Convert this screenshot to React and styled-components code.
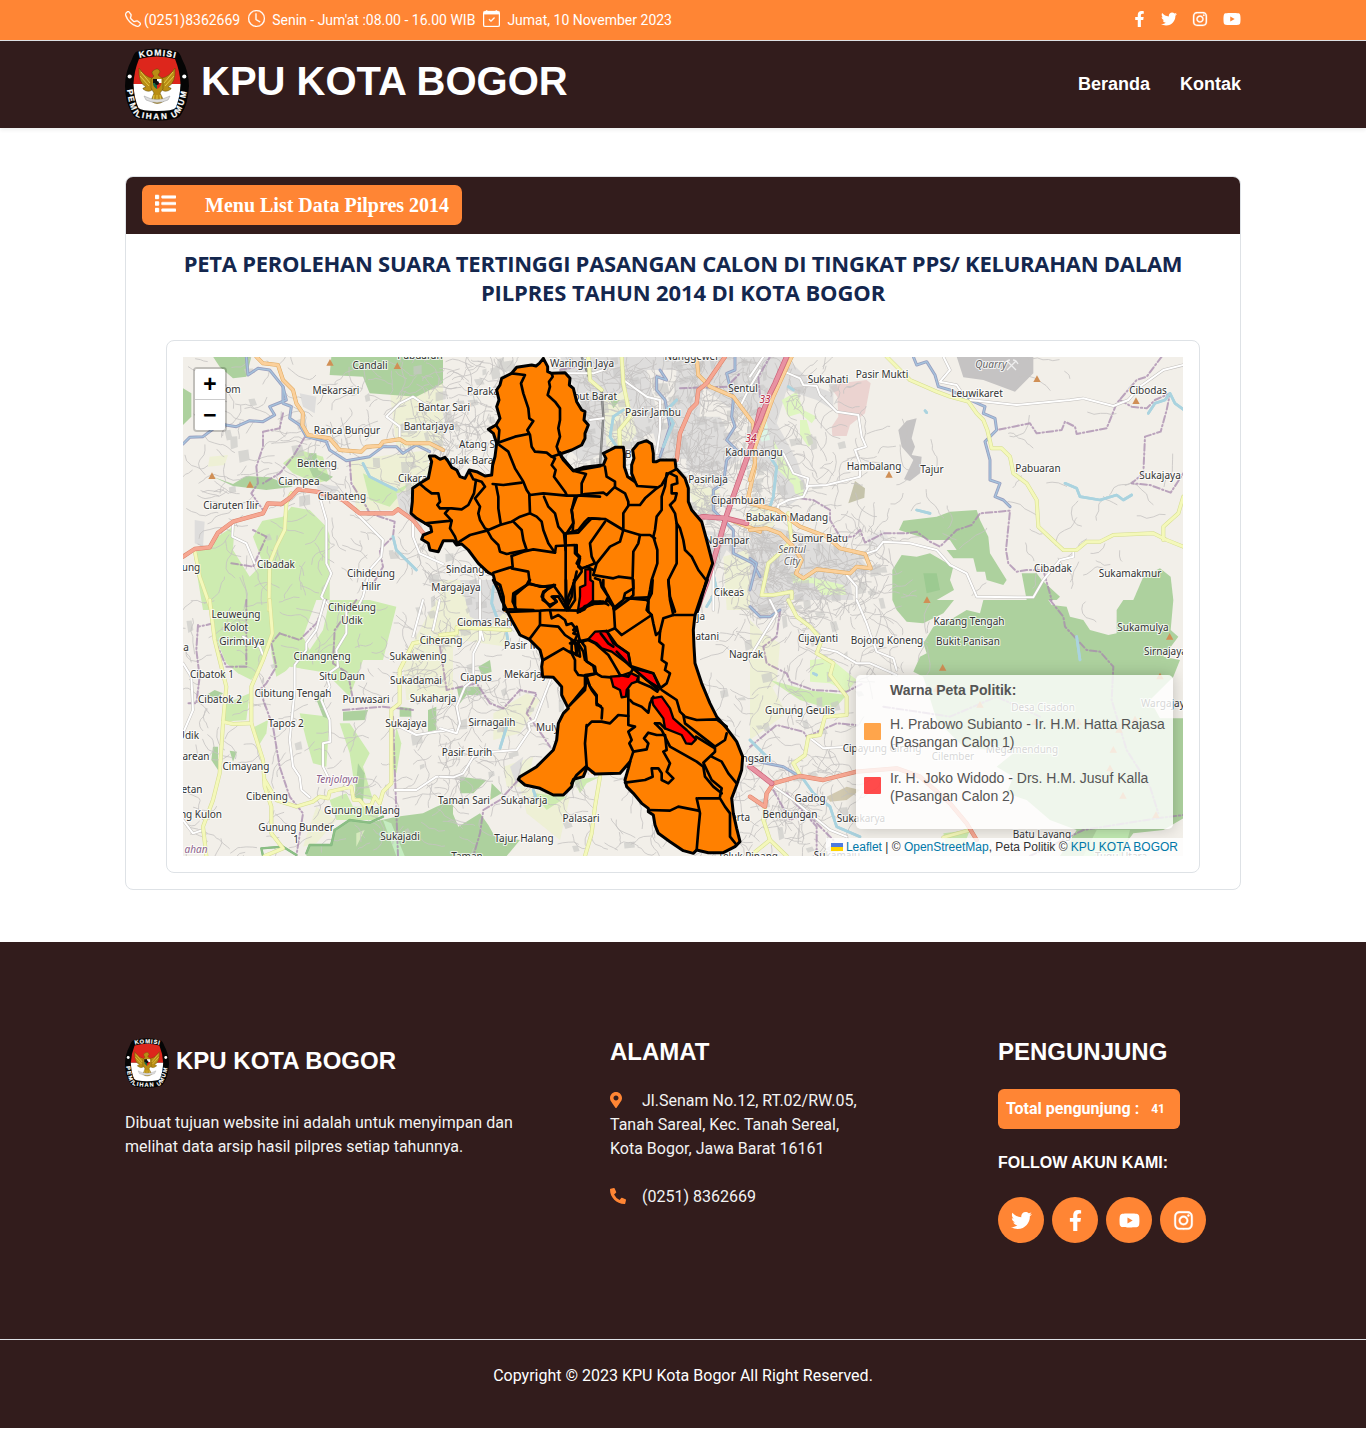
import React from "react";
import styled, { createGlobalStyle } from "styled-components";
import { BsTelephone, BsClock, BsCalendarCheck } from "react-icons/bs";
import {
  FaFacebookF,
  FaTwitter,
  FaInstagram,
  FaYoutube,
  FaList,
  FaMapMarkerAlt,
  FaPhoneAlt,
} from "react-icons/fa";

const ORANGE = "#ff8534";
const DARK = "#321c1c";
const SANS = '"Liberation Sans", Arial, sans-serif';
const BODY = 'Roboto, "Liberation Sans", sans-serif';

const GlobalStyle = createGlobalStyle`
  *, *::before, *::after { box-sizing: border-box; }
  body { margin: 0; background: #fff; font-family: ${BODY}; font-size: 16px; line-height: 24px; color: #212529; }
  h1, h2, h3, p { margin: 0; }
  a { color: inherit; text-decoration: none; }
  svg { display: block; }
`;

const Container = styled.div`
  width: 1116px;
  margin: 0 auto;
`;

const TopBar = styled.div`
  background: ${ORANGE};
  border-bottom: 1px solid #dee2e6;
  color: #fff;
`;
const TopInner = styled(Container)`
  height: 40px;
  display: flex;
  justify-content: space-between;
  padding-bottom: 1px;
  align-items: center;
`;
const ContactList = styled.div`
  display: flex;
  align-items: center;
  font-size: 14px;
`;
const ContactItem = styled.span`
  display: flex;
  align-items: center;
  gap: ${(p) => p.$gap}px;
  margin-right: 8px;
  white-space: nowrap;
  svg {
    margin-bottom: 2px;
    stroke: #fff;
    stroke-width: 0.3px;
  }
`;
const TopSocial = styled.div`
  display: flex;
  align-items: center;
  gap: 15px;
  padding-bottom: 2px;
`;
const FacebookIcon = styled(FaFacebookF)`
  width: 13px;
  height: 16px;
`;
const InstagramIcon = styled(FaInstagram)`
  stroke: currentColor;
  stroke-width: 10px;
`;

const Header = styled.header`
  background: ${DARK};
  box-shadow: 0 2px 4px rgba(0, 0, 0, 0.075);
`;
const HeaderInner = styled(Container)`
  height: 87px;
  display: flex;
  justify-content: space-between;
  align-items: center;
`;
const Brand = styled.a`
  display: flex;
  align-items: center;
  gap: ${(p) => p.$gap}px;
`;
const BrandName = styled.h1`
  font: 700 ${(p) => p.$size}px/1.2 ${SANS};
  color: #fff;
  padding-bottom: ${(p) => p.$lift || 0}px;
  white-space: nowrap;
`;
const Nav = styled.nav`
  display: flex;
  gap: 30px;
  padding-bottom: 2px;
  font: 700 18px/24px ${SANS};
  color: #fff;
`;

const Main = styled.main`
  padding: 48px 0 52px;
`;
const Card = styled.section`
  border: 1px solid #dee2e6;
  border-radius: 8px;
  overflow: hidden;
  padding-bottom: 16px;
`;
const CardHeader = styled.div`
  background: ${DARK};
  height: 57px;
  padding: 8px 16px;
`;
const MenuButton = styled.button`
  display: flex;
  align-items: center;
  gap: 29px;
  width: 320px;
  height: 40px;
  padding: 0 12px 1px 13px;
  border: 0;
  border-radius: 7px;
  background: ${ORANGE};
  color: #fff;
  font: 700 20px/24px "Liberation Serif", "Times New Roman", serif;
  white-space: nowrap;
  svg {
    margin-bottom: 2px;
    stroke: #fff;
    stroke-width: 12px;
  }
`;
const MapTitle = styled.h2`
  margin: 15px 40px 33px;
  text-align: center;
  font: 700 22px/29px "Open Sans", ${SANS};
  color: #14274e;
`;
const TitleLine = styled.span`
  display: block;
  letter-spacing: ${(p) => p.$spacing}px;
  white-space: nowrap;
`;
const MapFrame = styled.div`
  margin: 0 40px;
  padding: 16px;
  border: 1px solid #dee2e6;
  border-radius: 8px;
`;
const MapCanvas = styled.div`
  position: relative;
  height: 499px;
  overflow: hidden;
  background: #f2efe9;
`;
const ZoomControl = styled.div`
  position: absolute;
  top: 10px;
  left: 10px;
  border: 2px solid rgba(0, 0, 0, 0.2);
  border-radius: 4px;
  background-clip: padding-box;
  overflow: hidden;
`;
const ZoomButton = styled.div`
  width: 30px;
  height: ${(p) => (p.$first ? 31 : 30)}px;
  padding-top: 3px;
  background: #fff;
  border-bottom: ${(p) => (p.$first ? "1px solid #ccc" : "0")};
  display: grid;
  place-items: center;
  color: #000;
  font: 700 23px/28px "Liberation Mono", monospace;
`;
const Legend = styled.div`
  position: absolute;
  right: 10px;
  bottom: 27px;
  width: 317px;
  height: 154px;
  padding: 6px 8px;
  border-radius: 5px;
  background: rgba(255, 255, 255, 0.8);
  box-shadow: 0 0 15px rgba(0, 0, 0, 0.2);
  font: 14px/18px ${SANS};
  color: #555;
`;
const LegendTitle = styled.div`
  font-weight: 700;
  padding-left: 26px;
  margin-bottom: 16px;
`;
const LegendRow = styled.div`
  display: flex;
  align-items: center;
  gap: 9px;
  margin-bottom: 18px;
  white-space: nowrap;
`;
const Swatch = styled.i`
  width: 17px;
  height: 17px;
  flex: none;
  margin-bottom: 3px;
  opacity: 0.7;
  border-radius: 1px;
  background: ${(p) => p.$color};
`;
const Attribution = styled.div`
  position: absolute;
  right: 0;
  bottom: 0;
  height: 18px;
  padding: 0 5px;
  background: rgba(255, 255, 255, 0.8);
  font: 12px/18px ${SANS};
  color: #333;
  display: flex;
  align-items: center;
  white-space: pre;
  a { color: #0078a8; }
`;
const FlagIcon = styled.svg`
  margin-right: 3px;
`;

const Footer = styled.footer`
  background: ${DARK};
  color: #fff;
`;
const FooterGrid = styled(Container)`
  display: grid;
  grid-template-columns: 485px 388px 1fr;
  height: 397px;
  padding-top: 96px;
`;
const FooterHeading = styled.h2`
  font: 700 24px/28px ${SANS};
  margin-bottom: 23px;
`;
const FooterText = styled.p`
  color: #f3f3f3;
  white-space: pre-line;
  margin-top: ${(p) => p.$top || 0}px;
`;
const PlaceIcon = styled.span`
  display: inline-block;
  width: 32px;
  color: ${ORANGE};
  svg { display: inline-block; vertical-align: -2px; }
`;
const MarkerIcon = styled(FaMapMarkerAlt)`
  width: 12px;
  height: 16px;
`;
const VisitorBadge = styled.div`
  width: 182px;
  height: 40px;
  border-radius: 6px;
  background: ${ORANGE};
  display: flex;
  align-items: center;
  padding-left: 8px;
  font-weight: 700;
  font-size: 16px;
`;
const VisitorCount = styled.span`
  font-size: 12px;
  margin-left: 12px;
`;
const FollowTitle = styled.h3`
  font: 700 16px/24px ${SANS};
  margin: 22px 0 22px;
`;
const SocialRow = styled.div`
  display: flex;
  gap: 8px;
`;
const SocialButton = styled.a`
  width: 46px;
  height: 46px;
  border-radius: 50%;
  background: ${ORANGE};
  display: grid;
  place-items: center;
  font-size: 21px;
`;
const Copyright = styled.div`
  border-top: 1px solid #dee2e6;
  height: 89px;
  padding-top: 24px;
  text-align: center;
`;

/* ---------- Logo ---------- */

function KpuLogo({ width, height, id }) {
  return (
    <svg width={width} height={height} viewBox="0 0 64 73" preserveAspectRatio="none">
      <defs>
        <path id={`${id}-top`} d="M13.500 10Q32 5 52 10.500" />
        <path id={`${id}-low`} d="M1.800 40.500Q4.500 66 13 69Q32 73.500 50 69.200Q58 66 62.500 39" />
      </defs>
      <path
        d="M12 3.5Q32-2.5 52 3.5Q55 4.5 57 11Q64 24 64 38Q63 56 57 65Q55 69.500 51 70.500Q32 75 13 70.500Q9 69.500 7 65Q0 54 0 38Q0 24 7 11Q9 4.500 12 3.500Z"
        fill="#050505"
      />
      <path d="M14 11Q32 6 50 11Q55 23 55.500 36H8.500Q9 23 14 11Z" fill="#dd261c" />
      <path d="M8.500 36H55.500Q55 50 50.500 60Q48 63 32 63Q16 63 13.500 60Q9 50 8.500 36Z" fill="#fff" />
      <g fill="#b98d14" stroke="#5f4a0b" strokeWidth=".5">
        <path d="M27 30Q20 29 14 20Q13 35 21 39Q17 40 18 41Q23 45 27 42Z" />
        <path d="M37 30Q44 29 50 20Q51 35 43 39Q47 40 46 41Q41 45 37 42Z" />
        <path d="M29 28Q25 24 29 22Q34 19 35 24L33 27L38 31V41L35 45L39 53Q32 58 26 53L29 45L26 40V31Z" />
      </g>
      <path d="M16 24L25 35M15 28L24 38M48 24L39 35M49 28L40 38M29 47L28 54M32 47V55M35 47L36 54" stroke="#e7cf4c" strokeWidth=".9" />
      <path d="M28 31H32V35H28Z" fill="#111" />
      <path d="M32 31H36.500V35H32Z" fill="#fff" />
      <path d="M32 35H36.500Q36 39 32 41Z" fill="#dd261c" />
      <path d="M28 35H32V41Q28 39 28 35Z" fill="#1a6a45" />
      <circle cx="32" cy="35" r="2" fill="#111" />
      <path d="M19 48Q32 55 45 48L43 52Q32 57 21 52Z" fill="#ddd" stroke="#9a9a9a" strokeWidth=".5" />
      <circle cx="4.700" cy="28.500" r="2.100" fill="#fff" />
      <circle cx="59.300" cy="28.500" r="2.100" fill="#fff" />
      <g
        fill="#fff"
        stroke="#fff"
        strokeWidth=".2"
        fontFamily="Liberation Sans, Arial, sans-serif"
        fontWeight="700"
      >
        <text fontSize="8.500" textLength="36">
          <textPath href={`#${id}-top`} startOffset="1">KOMISI</textPath>
        </text>
        <text fontSize="8.200" textLength="97">
          <textPath href={`#${id}-low`} startOffset="1">PEMILIHAN UMUM</textPath>
        </text>
      </g>
    </svg>
  );
}

/* ---------- Map data: every tile is drawn in its own units, three per pixel ---------- */

const FOREST = "#add19e";
const FARM = "#cdebb0";
const SCRUB = "#eef0d5";
const URBAN = "#dedddc";

const TILES = [
  {
    x: 183, y: 350,
    areas: [
      [SCRUB, "620,120 780,90 780,300 640,290"],
      [SCRUB, "500,330 740,300 740,480 520,480"],
      [SCRUB, "80,320 135,315 125,345 75,350"],
      [FARM, "0,640 40,600 150,530 300,500 325,470 380,480 430,530 530,780 0,780"],
      ["#f2efe9", "0,470 120,500 90,590 30,600 60,780 0,780"],
      ["#f2efe9", "155,520 245,500 210,560 240,640 200,680 150,600"],
      ["#f2efe9", "440,520 540,500 600,560 590,700 520,780 440,780"],
      [FARM, "300,340 350,300 420,320 440,390 400,400 330,370"],
      [FARM, "540,370 640,420 680,400 620,470 560,450"],
      [FOREST, "445,20 440,75 540,80 560,130 700,140 760,110 780,100 780,20"],
      [FOREST, "90,20 205,20 190,80 150,85 110,50"],
      [FOREST, "0,115 25,130 25,200 0,225"],
      [FOREST, "90,380 150,402 190,378 260,382 330,410 250,420 150,408"],
      [FOREST, "380,310 400,310 405,360 450,380 430,395 390,380 370,335"],
      [URBAN, "350,130 400,140 395,190 360,170"],
      [URBAN, "400,400 470,410 440,450 410,440"],
      [URBAN, "640,430 690,420 720,540 650,480"],
      [URBAN, "35,510 65,515 60,590 35,580"],
    ],
    river: ["190,20 195,75 225,55 260,60 300,110 310,150 260,170 275,195 240,215 200,212 160,230 110,222 60,260 20,262 0,282", "300,110 300,160 325,170 320,205 350,225 370,260 430,275 440,300 490,332 560,320 600,290 640,290 660,310 700,285 740,305"],
    water: ["540,340 560,380 600,400 640,420", "630,560 640,600 700,660"],
    white: ["410,440 430,510 430,640 445,670 415,740 440,770", "150,520 148,560 190,580 215,640", "650,268 650,230 610,200 650,160 690,140 720,160 780,182", "520,490 600,570 595,620 560,660 540,740 520,780", "690,510 690,560 710,610 780,642"],
    yellow: ["325,430 310,460 305,540 280,590 260,640 258,780", "35,600 50,680 85,780"],
    orange: ["220,20 240,40 285,45 300,90 330,120 340,160 360,190 358,225 375,255 440,265 470,300 535,305 550,290 590,288 600,275 650,268 670,280 740,280 780,300"],
    red: ["0,620 35,597 80,592 105,548 150,515 240,490 255,460 295,462 325,440 345,418 400,425 480,450 530,490 630,490 645,478 690,510 725,555"],
    border: ["365,262 330,320 290,370 240,400", "300,190 290,235 240,245 240,290 220,350 225,400 205,430 240,480", "500,330 505,400 550,470 560,490 635,515 630,560 590,600 600,650 560,720", "145,640 210,650 250,560 210,540"],
    peaks: [[87, 378], [201, 404], [441, 38], [643, 48]],
  },
  {
    x: 183, y: 600,
    areas: [
      [FARM, "85,0 262,0 262,140 240,190 205,240 165,220 130,190 100,120"],
      [FARM, "268,0 560,0 640,20 600,180 540,180 500,290 440,230 330,200 280,230 265,160"],
      ["#f2efe9", "285,240 320,200 440,220 400,330 330,330"],
      ["#f2efe9", "400,0 440,0 420,90 380,150 360,110"],
      [FARM, "470,370 500,370 560,460 540,500 570,600 520,590 500,460"],
      [FARM, "130,310 200,280 190,360 120,365"],
      [FARM, "350,340 440,350 430,500 390,490 370,420"],
      [FARM, "215,380 255,360 250,400 225,440"],
      [FARM, "640,380 655,430 640,520 625,500"],
      [FARM, "440,600 490,580 510,620 600,620 580,660 460,660"],
      [SCRUB, "660,180 760,0 810,0 810,300 670,300"],
      [SCRUB, "400,620 460,660 400,730 360,740"],
      [FOREST, "455,690 500,660 560,668 640,650 720,640 760,620 810,600 810,768 370,768 380,735 440,735"],
      ["#c4ecc0", "600,660 625,670 665,768 640,768"],
      ["#d6e9bd", "520,700 545,690 520,740"],
      [FOREST, "395,285 420,270 425,330 445,360 420,350"],
      [FOREST, "480,335 555,330 545,360 480,362"],
      [FOREST, "650,320 685,325 685,350 650,350"],
      [FOREST, "735,330 760,320 760,390 735,395"],
      [FOREST, "90,440 105,440 105,510 85,480"],
      [FOREST, "140,452 162,455 150,485"],
      [FOREST, "525,490 545,520 540,610 515,590"],
      [FOREST, "70,285 95,270 120,280 100,300"],
    ],
    white: ["425,0 400,90 370,130 370,150 335,195 335,270 320,420 330,500 350,530 355,570 380,592", "490,30 490,100 460,150 465,200 430,225 440,260 415,300 440,360 442,425 420,430 420,500 440,540", "720,0 690,110", "770,0 750,90", "0,190 25,230 30,330 0,400", "630,370 700,405 760,395 810,390", "635,570 700,570 760,530 810,530", "180,110 230,140 240,165", "0,660 30,700 60,690"],
    yellow: ["80,0 95,120 130,260 120,370 110,520 90,600 60,680 70,768", "260,0 268,100 240,180 205,260 205,370 240,480 245,560 265,620 265,700 300,745 245,768", "120,365 150,372 205,370", "245,540 280,600 340,620 390,605 410,590 435,595 440,575 505,560 512,600 530,600 545,618 565,615 575,590 590,610 600,575 625,550 625,330 650,310 650,210 690,130 810,108"],
    border: ["45,75 40,150 50,230 40,310 10,310", "90,70 70,75 45,80", "290,100 265,130 280,200 250,250 230,270 270,380 290,500 320,590 360,640 340,768", "520,0 455,90 450,190 495,220 510,300", "290,100 350,120 400,70 430,0", "630,350 635,500 645,768", "480,330 600,320 690,330", "190,0 190,200 130,200 100,130"],
    dark: ["455,690 445,735 380,735 370,760", "455,690 500,660 560,668 600,650", "240,768 235,745 300,740 340,765"],
  },
  {
    x: 440, y: 580,
    areas: [
      [SCRUB, "0,0 150,0 200,110 200,200 60,180 0,250"],
      [SCRUB, "160,400 260,340 300,360 240,460 160,480"],
      [SCRUB, "190,560 280,530 260,620 200,620"],
      [SCRUB, "240,620 390,650 360,780 260,700"],
      [FARM, "280,640 380,650 320,690"],
      [FARM, "400,600 480,590 440,610 420,640"],
      [FOREST, "0,660 30,680 55,740 120,700 145,735 165,770 240,780 200,828 0,828"],
      [FOREST, "60,590 140,600 100,640 60,640"],
      [FOREST, "155,610 185,640 150,660"],
      [FOREST, "115,260 150,240 155,275 125,285"],
      [FOREST, "50,320 120,320 125,345 80,345 60,370"],
      [URBAN, "210,560 250,530 230,620"],
      [URBAN, "60,0 160,0 200,90 150,140 90,110"],
    ],
    water: ["200,440 180,505", "160,20 155,70 170,110", "200,160 205,190", "280,630 290,660"],
    border: ["0,200 20,330 110,310 150,370 190,385 240,330 290,340 260,400 310,470 330,500", "235,600 180,660 130,690 120,760 100,828"],
    white: ["120,0 120,180 100,220 100,300 75,320 50,380 60,430 50,460 0,445", "335,290 285,420 265,430 270,450 230,510 160,515 100,530 70,580 40,592 0,590", "120,140 130,180"],
    yellow: ["0,165 50,160 50,142 210,150", "480,590 465,680 455,760 435,828"],
    peaks: [],
  },
  {
    x: 560, y: 350,
    areas: [
      [URBAN, "0,20 600,20 600,170 540,200 430,110 400,330 300,320 280,250 160,290 70,340 30,300 70,220 60,150"],
      [SCRUB, "130,150 200,120 230,250 200,290 140,290"],
      [SCRUB, "380,400 480,420 460,480 430,500 400,460"],
      [URBAN, "370,200 480,200 540,330 450,380 380,360"],
      [URBAN, "420,540 560,560 600,700 500,600 470,660"],
      [SCRUB, "490,620 560,600 600,700 600,780 500,780"],
      ["#f2efe9", "260,60 350,60 330,250 290,180"],
      [FOREST, "150,150 180,150 160,175"],
      ["#d8d8d8", "550,120 600,80 600,200 580,210"],
    ],
    river: ["300,60 320,90 290,80 290,120 315,150 330,230 300,320", "525,20 525,60 500,70 520,150 515,200 525,230 500,270 530,300 500,330 490,400 460,420 460,480 520,540 520,610 580,640 600,680"],
    water: ["190,180 160,200 150,260 170,290", "350,150 320,180 340,220 310,290", "455,650 470,720 440,770"],
    rail: ["65,20 90,90 125,125 130,200 120,345"],
    white: ["190,90 260,140 300,150 300,240 290,310", "540,170 570,110 600,60", "0,70 100,70 130,60", "90,210 130,205", "460,640 460,780"],
    yellow: ["185,20 190,100 210,200 178,240 180,290", "85,20 90,90 125,120"],
    orange: ["410,20 415,75 450,110 520,140 580,220 585,350 565,440 600,470", "500,505 600,545"],
    red: ["495,20 440,100 415,120 410,160 390,180 360,250 350,330"],
    motorway: ["600,180 580,270 500,495 470,600 440,700 410,780", "385,510 430,500 500,505 560,520"],
    border: ["360,115 500,110 540,70", "0,60 50,50"],
  },
  {
    x: 750, y: 350,
    areas: [
      [URBAN, "0,20 105,20 200,110 250,130 250,180 200,150 110,120 80,220 140,330 175,430 110,470 60,370 0,340"],
      [URBAN, "0,540 70,530 180,560 330,620 360,660 300,690 310,750 0,750"],
      [SCRUB, "0,460 80,480 70,530 0,530"],
      ["#e8e6e4", "350,560 400,540 420,570 360,600"],
      ["#c5c3c3", "620,20 850,20 850,70 795,125 700,90 640,82"],
      ["#c5c3c3", "445,240 470,212 500,205 485,265 495,290 485,315 515,320 510,370 480,393 462,388 490,330 455,290"],
      ["#ebd3d0", "240,110 270,100 350,90 362,100 345,190 300,225 290,258 247,258 245,230 265,200 262,140"],
      ["#c5c3ab", "315,393 345,415 343,443 295,460"],
      ["#dff6c0", "70,270 110,345 160,400 160,440 135,430 130,405 85,360"],
      ["#dff6c0", "150,210 170,210 190,280 175,290 150,255"],
      ["#dff6c0", "95,150 140,125 160,180 200,200 185,220 150,190 115,200"],
      ["#dff6c0", "120,670 180,680 280,705 290,735 215,735 190,700 130,700"],
      ["#ddf5e6", "20,230 50,215 60,270 35,275"],
      [FOREST, "447,540 460,512 560,500 600,485 680,480 690,510 715,560 720,610 770,690 760,705 710,690 705,665 680,665 670,625 610,625 590,600 620,600 600,570 540,570"],
      [FOREST, "427,660 455,615 500,620 540,610 610,650 600,690 612,720 560,750 427,750"],
      ["#9cca91", "520,670 560,670 570,720 530,730"],
      [FOREST, "815,670 860,670 875,690 930,740 920,750 830,750"],
      [FOREST, "1150,750 1180,680 1230,655 1262,680 1270,750"],
    ],
    river: ["490,20 500,45 530,35 555,75 565,110 600,120 660,150 705,170 700,190 735,205 740,240 705,275 720,330 720,390 750,400 735,440 760,450 780,470", "0,625 20,640 0,720"],
    water: ["945,400 980,415 990,440 1050,450 1100,435 1120,450 1145,435", "1195,190 1215,160 1245,150 1260,130 1275,160 1300,178", "60,320 80,350 70,440 60,470", "500,480 540,490", "115,110 130,120", "525,182 530,188"],
    white: ["0,80 40,20", "110,68 150,85 160,105 200,108 210,135 260,185 325,195 335,260 348,290 315,300 330,340 330,380 230,405 175,408 160,440 115,450 85,465 80,490", "660,150 800,165 960,150 1000,145 1090,168 1135,150 1170,110 1240,60 1300,45", "580,20 600,60 570,95 620,105 650,150", "350,610 380,600 400,575 480,580 560,600 600,645 650,670 680,740 850,742 880,690 930,630 970,620 970,600", "290,675 320,710 320,750", "100,310 130,370 175,385 170,410"],
    yellow: ["410,20 480,90 560,125 600,140 655,155 680,190 700,210 712,240 725,295 755,295 780,320 790,370 830,400 860,450 865,530 940,600 980,600 1010,575 1050,575 1090,555 1210,550 1250,570 1300,590", "1240,570 1240,530 1285,490 1300,440", "115,490 125,570 100,600 55,640 35,735 70,735 125,725 125,745"],
    orange: ["0,460 80,480 150,530 230,560 270,595 345,612 362,655 320,650 300,670 200,658 160,685 138,670 155,630 130,590 90,550 50,535 0,540", "125,20 70,140 15,290 15,340 0,390"],
    motorway: ["110,20 75,100 60,130 30,210 0,275"],
    border: ["30,140 25,80 60,20", "1235,20 1190,80 1160,90 1100,160 1070,235 980,252 975,230 945,215 935,240 860,250 840,220 790,230 740,240", "150,445 190,450 240,480 240,510 270,560 310,560 330,540 345,578 400,550 470,550 500,545 540,575 570,590 620,540 665,525 690,490 780,482 768,600 775,640 800,665 830,660 880,660 905,750", "1110,150 1145,170 1190,175 1215,150 1260,130 1250,180 1232,245 1185,260 1180,370 1145,400 1200,405 1262,428 1300,370"],
    peaks: [[861, 87], [417, 374], [1158, 153]],
  },
  {
    x: 750, y: 600,
    areas: [
      [SCRUB, "0,60 40,100 90,130 80,250 0,330"],
      [SCRUB, "0,150 70,200 60,250 110,340 0,420"],
      [FARM, "60,240 170,270 290,285 250,330 150,300"],
      ["#dff6c0", "180,180 240,175 320,240 290,275 240,250 180,245"],
      [URBAN, "0,0 100,0 110,40 0,30"],
      ["#d1c9b0", "230,590 290,560 330,570 290,600 240,605"],
      [FOREST, "427,0 612,0 580,40 520,70 470,65 440,30"],
      [FOREST, "700,0 895,0 905,15 950,20 960,50 1000,60 1020,90 1075,105 1100,100 1100,30 1120,0 1270,0 1262,90 1285,110 1240,170 1290,180 1270,230 1200,300 1230,355 1300,355 1300,655 1240,690 1150,700 1100,768 930,768 980,690 900,660 830,600 770,580 790,530 740,500 790,460 640,440 560,360 520,230 490,215 510,170 530,160 520,130 550,80 600,60 650,30 690,40"],
      ["#bfe8b0", "1040,690 1140,690 1120,768 1000,768"],
      [FARM, "580,700 660,690 640,740 590,740"],
    ],
    river: ["0,20 30,50 60,50 90,30", "0,480 100,500 150,530"],
    water: ["155,530 190,580 240,620 260,680 330,710", "980,110 990,180", "190,220 200,225", "0,420 60,480"],
    white: ["320,0 350,70 360,100 380,155 430,175 440,210", "215,145 260,155 320,190 360,190 440,225", "65,555 130,600 240,690 290,710", "175,410 220,445 290,440", "0,170 80,40 60,0"],
    yellow: ["115,0 140,50 180,80 215,120 200,160 250,190 240,225 290,290 290,345 225,350 210,405 175,410 165,465 130,490 150,525", "45,620 40,660 60,720 110,768", "60,720 0,768", "580,712 660,690"],
    red: ["0,590 45,620 50,580 70,550 150,528 220,540 320,515 440,505 510,530 600,610 650,670 680,720"],
    motorway: ["0,500 65,550"],
    border: ["90,30 80,110 40,140 50,190 110,220 120,245 190,270 290,275 340,250", "0,440 80,375 160,395 170,410 260,370 320,375", "70,570 120,660 170,640 250,720", "110,580 200,680 200,768", "900,0 940,50 945,80 1010,150 1050,155 1090,200 1085,300 1130,450 1200,560 1225,640", "400,320 600,350 740,290 870,350", "840,768 1000,690 1220,655 1300,645"],
    peaks: [[531, 0], [578, 203], [560, 266], [690, 314], [855, 366], [985, 366], [1259, 110], [1230, 229], [1155, 358], [1107, 389], [1090, 449], [1080, 505], [1119, 587], [1218, 645]],
  },
];

const ROAD_STYLES = [
  ["dark", "#7fb77f", 7, "#8cbf85", 5],
  ["river", "#9a9fc0", 9, "#a5c4dd", 4],
  ["water", "#aad3df", 8, "#aad3df", 8],
  ["rail", "#777", 7, "#aaa", 2],
  ["white", "#c2bfbc", 9, "#ffffff", 6],
  ["yellow", "#d5dc90", 12, "#f4f8ba", 9],
  ["orange", "#dfa85e", 12, "#fbd09b", 9],
  ["red", "#dc8068", 13, "#f6a792", 10],
  ["motorway", "#cb6078", 16, "#e892a2", 12],
];

/* Residential streets: [x, y, width, height, number of streets, patches of built-up land] */
const STREET_ZONES = [
  [183, 357, 280, 150, 140, 12],
  [183, 500, 290, 170, 90, 6],
  [183, 660, 300, 196, 115, 4],
  [400, 357, 110, 140, 150, 30],
  [410, 540, 170, 260, 220, 36],
  [560, 357, 200, 130, 360, 90],
  [670, 450, 110, 130, 150, 30],
  [700, 570, 160, 286, 180, 18],
  [560, 760, 280, 96, 100, 10],
  [750, 357, 110, 150, 80, 14],
  [750, 530, 130, 90, 180, 35],
  [860, 357, 323, 250, 50, 0],
  [860, 590, 70, 80, 20, 0],
];

function makeRandom(seed) {
  let s = seed;
  return () => {
    s = (s * 1664525 + 1013904223) % 4294967296;
    return s / 4294967296;
  };
}

function buildStreets() {
  const rnd = makeRandom(20231110);
  const lines = [];
  const patches = [];
  STREET_ZONES.forEach(([x, y, w, h, count, built]) => {
    for (let i = 0; i < count; i += 1) {
      let px = x + rnd() * w;
      let py = y + rnd() * h;
      let angle = Math.floor(rnd() * 4) * (Math.PI / 2) + 0.3;
      let d = `M${px.toFixed(1)} ${py.toFixed(1)}`;
      const steps = 3 + Math.floor(rnd() * 6);
      for (let k = 0; k < steps; k += 1) {
        angle += (rnd() - 0.5) * 1.3;
        const len = 2 + rnd() * 5;
        px += Math.cos(angle) * len;
        py += Math.sin(angle) * len;
        d += `L${px.toFixed(1)} ${py.toFixed(1)}`;
      }
      lines.push(d);
    }
    for (let i = 0; i < built; i += 1) {
      const px = x + rnd() * w;
      const py = y + rnd() * h;
      const a = 3 + rnd() * 8;
      const b = 3 + rnd() * 9;
      patches.push(
        `M${px.toFixed(1)} ${py.toFixed(1)}l${a.toFixed(1)} ${(-rnd() * 3).toFixed(1)}l${(rnd() * 3).toFixed(1)} ${b.toFixed(1)}l${(-a).toFixed(1)} ${(rnd() * 3).toFixed(1)}z`
      );
    }
  });
  return { lines: lines.join(""), patches: patches.join("") };
}
const STREETS = buildStreets();

/* [text, x, baseline, anchor, kind] */
const LABELS = [
  ["Candali", 370, 369], ["Mekarsari", 336, 394], ["Ranca Bungur", 347, 434], ["Bantar Sari", 444, 411],
  ["Bantarjaya", 429, 430], ["Parakan Jaya", 467, 395, "start"], ["Atang Senjaya", 459, 448, "start"],
  ["Semplak Barat", 497, 464, "end"], ["Benteng", 317, 467], ["Ciampea", 299, 485],
  ["Cikarawang", 398, 482, "start"], ["Cibanteng", 342, 500], ["Ciaruten Ilir", 231, 509], ["om", 233, 393],
  ["Cibadak", 276, 568], ["ung", 191, 571], ["Cihideung", 371, 577], ["Hilir", 371, 590],
  ["Cihideung", 352, 611], ["Udik", 352, 624], ["Margajaya", 456, 591], ["Sindangbarang", 446, 573, "start"],
  ["Leuweung", 236, 618], ["Kolot", 236, 631], ["Girimulya", 242, 645], ["a", 186, 651],
  ["Ciherang", 441, 644], ["Ciomas Rahayu", 457, 626, "start"], ["Sukawening", 418, 660],
  ["Cinangneng", 322, 660], ["Situ Daun", 342, 680], ["Sukadamai", 416, 684], ["Cibatok 1", 212, 678],
  ["Cibatok 2", 220, 703], ["Cibitung Tengah", 293, 697], ["Purwasari", 366, 703], ["Sukaharja", 433, 702],
  ["Tapos 2", 286, 727], ["Sukajaya", 406, 727], ["Udik", 199, 739, "end"], ["Ciapus", 476, 681],
  ["Pasir Mulya", 504, 649, "start"], ["Mekarjaya", 504, 678, "start"], ["Sirnagalih", 492, 726],
  ["Mulyaharja", 536, 731, "start"], ["Pasir Eurih", 467, 756], ["Tenjolaya", 337, 783, "middle", "district"],
  ["Cimayang", 246, 770], ["arean", 196, 760], ["etan", 192, 793], ["Cibening", 267, 800],
  ["ng Kulon", 222, 818, "end"], ["Gunung Malang", 362, 814], ["Gunung Bunder", 296, 831], ["1", 296, 843],
  ["Sukajadi", 400, 840], ["ahan", 196, 853, "middle", "district"], ["Taman Sari", 464, 804],
  ["Sukaharja", 524, 804], ["Palasari", 581, 822], ["Tajur Halang", 524, 842], ["Taman", 467, 860],
  ["Waringin Jaya", 582, 367], ["Pabuaran", 420, 359], ["Nanggewer", 692, 360], ["Cilebut Barat", 617, 400, "end"],
  ["Pasir Jambu", 653, 416], ["Sentul", 743, 392], ["Kadumangu", 754, 456], ["Pasirlaja", 708, 483],
  ["Cipambuan", 738, 504], ["Babakan Madang", 787, 521], ["Ngampar", 727, 544], ["Cikeas", 729, 596],
  ["Cimahpar Raja", 705, 620, "end"], ["Sukatani", 719, 640, "end"], ["Nagrak", 746, 658], ["Bojongsari", 771, 762, "end"],
  ["Kerta", 750, 821, "end"], ["Teluk Pinang", 748, 860], ["Sukahati", 828, 383], ["Pasir Mukti", 882, 378],
  ["Quarry", 991, 368, "middle", "place"], ["Leuwikaret", 977, 397], ["Cibodas", 1148, 394],
  ["Sukajaya", 1160, 479], ["Pabuaran", 1038, 472], ["Tajur", 932, 473], ["Hambalang", 874, 470],
  ["Bogor", 625, 458, "start"], ["Sumur Batu", 820, 542], ["Sentul", 792, 553, "middle", "place"], ["City", 792, 565, "middle", "place"],
  ["Cibadak", 1053, 572], ["Sukamakmur", 1130, 577], ["Cijayanti", 818, 642], ["Bojong Koneng", 887, 644],
  ["Karang Tengah", 969, 625], ["Bukit Panisan", 968, 645], ["Sukamulya", 1143, 631],
  ["Sirnajaya", 1144, 655, "start"], ["Wargajaya", 1141, 707, "start"], ["Gunung Geulis", 800, 714],
  ["Desa Cisadon", 1043, 711], ["Cipayung Girang", 882, 752], ["Cilember", 953, 760], ["Megamendung", 1022, 753],
  ["Gadog", 810, 802], ["Bendungan", 790, 818], ["Sukakarya", 861, 822], ["Batu Layang", 1042, 838],
  ["Sukamaju", 837, 859], ["Tugu Utara", 1121, 860], ["33", 765, 403, "middle", "road"], ["34", 751, 442, "middle", "road"],
];
const LABEL_KINDS = {
  village: ["#333", "normal"],
  district: ["#8d618b", "italic"],
  place: ["#666", "italic"],
  road: ["#b5203c", "italic"],
};

const CITY = [
  {
    x: 400, y: 350,
    shape:
      "430,25 418,40 408,48 395,45 350,52 335,70 305,85 300,105 290,120 297,150 290,170 300,205 288,225 265,238 280,250 290,280 285,320 278,345 275,375 255,378 240,370 230,365 208,360 195,385 180,380 170,360 155,352 145,335 135,322 120,328 105,318 88,318 95,335 85,385 60,400 38,415 37,455 33,490 50,505 75,520 92,530 95,545 70,555 65,568 85,580 90,600 115,605 130,572 160,572 170,585 185,582 205,600 235,640 265,668 280,675 285,695 300,705 310,740 312,785 605,785 605,348 545,358 520,362 490,330 480,312 515,300 545,285 555,265 555,250 565,225 552,210 555,185 545,180 530,155 520,115 508,105 510,85 495,68 455,70 443,65 443,50",
    edge:
      "600,348 545,358 520,362 490,330 480,312 515,300 545,285 555,265 555,250 565,225 552,210 555,185 545,180 530,155 520,115 508,105 510,85 495,68 455,70 443,65 443,50 430,25 418,40 408,48 395,45 350,52 335,70 305,85 300,105 290,120 297,150 290,170 300,205 288,225 265,238 280,250 290,280 285,320 278,345 275,375 255,378 240,370 230,365 208,360 195,385 180,380 170,360 155,352 145,335 135,322 120,328 105,318 88,318 95,335 85,385 60,400 38,415 37,455 33,490 50,505 75,520 92,530 95,545 70,555 65,568 85,580 90,600 115,605 130,572 160,572 170,585 185,582 205,600 235,640 265,668 280,675 285,695 300,705 310,740 312,780",
    lines: [
      "335,70 375,75 363,100 370,130 385,175 388,205 400,213 382,240 390,255 395,290 405,305 440,308 455,320 480,312",
      "290,280 345,260 385,252", "288,225 298,240 295,275",
      "455,70 458,80 447,95 450,110 443,135 465,155 480,175 480,210 475,235 480,260 470,290 478,312",
      "455,320 465,325 455,345 467,360 462,380 495,425 500,435",
      "298,285 325,305 345,355 370,395 380,420 390,435", "278,402 310,405 365,398",
      "390,435 430,430 500,437 545,437 600,440", "545,437 545,400 558,372 520,362",
      "288,405 295,440 295,475 302,520", "208,365 220,388 245,395 255,410 225,445 240,470 235,490 240,510 255,535 265,540",
      "228,390 222,430 205,465 185,478 155,475 120,475 112,465 120,455 115,430 95,430 75,415 60,402",
      "75,520 155,512 135,490 145,478", "155,512 150,535 165,560 170,575",
      "170,580 210,555 260,542 300,525 335,515 360,500 390,490 388,435",
      "390,490 410,500 425,515 430,540 445,580 465,608", "432,440 445,470 465,490 475,530 492,550 497,600",
      "530,440 515,480 520,520 500,550 535,548 560,520 575,505 600,507", "497,550 497,770",
      "262,542 275,565 295,585 300,605 320,612 355,605 378,600", "340,515 365,540 370,570 380,600",
      "335,618 370,605 400,598 465,608 468,588 525,585 525,610 540,625 535,650 545,660", "335,618 338,650 280,668",
      "335,655 385,665 388,690 380,705 345,735 345,775", "388,700 420,710 450,710 430,730 428,750 450,765 470,755 460,740 475,740",
      "460,705 485,740 505,775", "310,778 400,780", "545,665 520,700 515,740 500,775",
    ],
    red: [],
  },
  {
    x: 560, y: 350,
    shape:
      "-5,350 5,320 40,362 70,352 130,345 135,325 130,310 150,300 165,292 190,292 193,310 193,350 203,380 213,378 215,345 222,325 218,300 235,280 260,272 275,282 280,310 280,335 290,335 300,330 345,330 348,355 375,385 385,415 385,455 395,480 425,515 440,570 458,640 440,690 420,760 412,790 -5,790",
    edge:
      "0,308 5,320 40,362 70,352 130,345 138,325 130,310 150,300 165,292 190,292 193,310 193,350 203,380 225,395 215,370 215,345 222,325 218,300 235,280 260,272 275,282 280,310 280,335 290,335 300,330 345,330 348,355 375,385 385,415 385,455 395,480 425,515 440,570 458,640 440,690 420,760 412,785",
    lines: [
      "45,440 75,432 130,428 140,435 165,410 165,395 140,380 135,350",
      "45,440 35,480 40,515 38,545 20,550", "38,545 55,540 75,515 85,505 135,507 190,540 240,555 270,555 285,565",
      "165,412 195,430 205,455 205,465 240,465 255,445 290,415 305,405 325,370 348,358", "225,395 232,408 290,412",
      "205,467 190,490 190,540", "320,370 315,410 305,440 305,480 290,500 285,540 280,560 292,600 292,640 275,690 270,720 265,745 265,785",
      "330,370 350,380 352,400 335,405 335,430 350,430 345,450 330,465 345,490 350,520 360,535 370,570 375,600 395,620 415,660 438,690",
      "350,520 350,640 325,690 330,740 345,785", "135,515 90,580 95,620 105,640 80,650",
      "190,540 180,575 150,590 110,640 100,675", "240,555 235,580 220,605 218,680",
      "100,675 160,685 175,680 218,685 220,715 195,730 190,750 160,775", "105,685 120,690 125,710 145,740 135,760",
      "195,745 265,742", "50,585 50,610 60,620 50,640 65,655 80,650 100,660", "50,665 42,700 25,740 20,780", "98,755 130,755 145,765",
    ],
    red: ["76,658 91,658 91,690 99,695 99,752 84,764 74,778 53,788 60,740 60,712 76,705"],
  },
  {
    x: 440, y: 580,
    shape:
      "160,-5 175,30 185,60 205,100 215,120 240,165 268,178 300,210 308,240 305,260 308,290 340,292 365,320 365,345 385,385 370,400 355,430 350,480 340,510 290,560 240,590 235,598 255,615 300,625 340,645 370,645 395,620 400,598 430,590 440,565 455,582 485,578 485,-5",
    edge:
      "160,0 175,30 185,60 205,100 215,120 240,165 268,178 300,210 308,240 305,260 308,290 340,292 365,320 365,345 385,385 370,400 355,430 350,480 340,510 290,560 240,590 235,598 255,615 300,625 340,645 370,645 395,620 400,598 430,590 440,565",
    lines: [
      "200,96 300,92 330,90 415,92", "270,0 265,12 220,40 218,65 230,90",
      "265,12 310,20 345,15 310,35 305,50 330,80 350,65 335,50 355,50 380,90", "378,0 380,90", "385,90 405,60 402,0",
      "415,90 440,80 460,72 480,65", "300,95 300,135 270,175", "300,135 355,140 375,165 405,185 410,225",
      "330,90 335,115 355,105 375,120 380,135 395,130 410,150 400,160 412,165 405,180 430,185",
      "310,240 370,205 395,220 405,240 405,270 415,285 440,288 465,282 460,258 435,240 430,215 415,190",
      "390,215 420,230 415,185 445,178 460,180", "440,290 435,330 405,360 385,380", "440,300 455,330 470,350 470,375 482,378",
    ],
    red: [],
  },
  {
    x: 570, y: 580,
    shape:
      "-5,-5 412,-5 395,45 375,105 370,150 372,200 375,250 395,310 420,370 440,410 470,445 500,485 518,530 515,570 500,615 485,655 490,700 500,745 510,785 495,800 460,818 415,818 380,810 370,820 340,812 300,785 265,760 255,735 250,705 235,695 235,685 215,670 190,640 170,620 165,600 175,565 180,545 150,580 75,582 48,560 20,585 -5,600",
    edge:
      "412,0 395,45 375,105 370,150 372,200 375,250 395,310 420,370 440,410 470,445 500,485 518,530 515,570 500,615 485,655 490,700 500,745 510,785 495,800 460,818 415,818 380,810 370,820 340,812 300,785 265,760 255,735 250,705 235,695 235,685 215,670 190,640 170,620 165,600 175,565 180,545 150,580 75,582 48,560 20,585 5,610",
    lines: [
      "30,95 45,78 70,72 100,70 115,62 130,80 132,95 135,145 155,165 245,105 230,90 235,65 230,60 180,55 135,88",
      "180,55 190,45 190,0", "100,0 100,20 110,40 135,85", "235,60 245,40 248,0",
      "295,0 300,60 310,105 375,105", "310,105 280,115 270,155 258,165 250,130 245,105",
      "270,155 268,185 280,195 275,240 290,250 285,270 300,280 290,310 270,325", "135,145 110,155",
      "110,153 140,195 175,220 182,258 250,280 272,325", "140,215 180,258 230,300 265,330", "55,180 75,190 115,225 130,250 150,285 175,290 190,265",
      "92,160 115,190 130,200", "175,330 175,395 175,408", "205,290 205,305 240,320 262,335", "180,360 190,370 215,380 235,398 240,370 250,350",
      "275,330 290,340 320,360 330,395 345,410 380,420 440,418 470,440", "340,405 345,430 435,500 465,480 470,460",
      "50,290 60,320 80,345 80,370 97,385 95,415", "0,375 45,320 45,285 80,280", "30,180 45,200 50,245 75,260 78,280 95,290 122,292",
      "0,190 20,190 20,225 5,215 5,180", "10,150 20,140 30,185 55,180",
      "50,440 65,425 95,425 120,430 145,405 175,408 175,435 195,440 175,455 185,480 178,490 190,515 180,545", "50,435 45,490 50,560",
      "190,515 230,508 235,490 222,475 235,458 260,465 285,465 290,510 280,515 300,550 290,575 310,595 295,610 275,600 275,580 265,565 245,565 248,590 225,600 165,608",
      "255,430 275,450 300,500 380,545 400,560 405,590 430,620 455,640", "255,430 270,430 285,445",
      "378,470 435,505 435,515 400,548 425,600 455,625 450,650", "425,530 455,545 475,580 500,610",
      "385,655 450,655 465,680 480,700 480,770 500,795", "380,655 390,700 385,750 380,810", "235,690 300,692 325,680 385,692",
    ],
    red: [
      "55,178 75,155 110,153 130,190 175,220 182,258 125,215 95,205 80,190",
      "190,265 250,280 270,325 230,300", "122,290 150,288 180,278 205,290 200,305 185,310 170,330 168,350 155,352 150,330 130,320",
      "245,355 275,350 300,385 310,415 350,450 378,478 365,492 348,490 335,465 285,445 280,415 250,375",
    ],
  },
];

const at = (t) => `translate(${t.x} ${t.y}) scale(.33333)`;

function BaseMap() {
  return (
    <svg width="1000" height="499" viewBox="183 357 1000 499">
      {TILES.map((t, i) => (
        <g key={i} transform={at(t)}>
          {t.areas.map(([fill, points], k) => (
            <polygon key={k} points={points} fill={fill} />
          ))}
        </g>
      ))}
      <path d={STREETS.patches} fill="#c8c7c6" opacity=".65" />
      <path d={STREETS.lines} fill="none" stroke="#c5c3c1" strokeWidth=".8" />
      <g fill="none" strokeLinejoin="round" strokeLinecap="round">
        {TILES.map((t, i) => (
          <g key={i} transform={at(t)} stroke="#a88aae" strokeWidth="6" strokeDasharray="20 8 4 8" opacity=".75">
            {(t.border || []).map((points, k) => (
              <polyline key={k} points={points} />
            ))}
          </g>
        ))}
        {ROAD_STYLES.map(([name, casing, outer, color, inner]) =>
          TILES.map((t, i) => (
            <g key={name + i} transform={at(t)}>
              {(t[name] || []).map((points, k) => (
                <polyline key={`c${k}`} points={points} stroke={casing} strokeWidth={outer} />
              ))}
              {(t[name] || []).map((points, k) => (
                <polyline key={`f${k}`} points={points} stroke={color} strokeWidth={inner} />
              ))}
            </g>
          ))
        )}
      </g>
      {TILES.map((t, i) => (
        <g key={i} transform={at(t)} fill="#d08f55">
          {(t.peaks || []).map(([x, y], k) => (
            <path key={k} d={`M${x} ${y - 11}l11 20h-22z`} />
          ))}
        </g>
      ))}
      <path d="M1007 361l9 9M1016 361l-9 9M1005 364q2-4 5-4M1018 364q-2-4-5-4" stroke="#eee" strokeWidth="1.300" fill="none" />
      <g fontFamily="Noto Sans, Open Sans, sans-serif" fontSize="10" stroke="#fff" strokeOpacity=".75" strokeWidth="2.200" strokeLinejoin="round" paintOrder="stroke">
        {LABELS.map(([text, x, y, anchor = "middle", kind = "village"], i) => (
          <text key={i} x={x} y={y} textAnchor={anchor} fill={LABEL_KINDS[kind][0]} fontStyle={LABEL_KINDS[kind][1]}>
            {text}
          </text>
        ))}
      </g>
      {CITY.map((c, i) => (
        <polygon key={i} transform={at(c)} points={c.shape} fill="#ff8000" />
      ))}
      <g fill="none" stroke="#000" strokeWidth="9" strokeLinejoin="round" strokeLinecap="round">
        {CITY.map((c, i) => (
          <g key={i} transform={at(c)}>
            {c.red.map((points, k) => (
              <polygon key={k} points={points} fill="#f00" strokeWidth="7" />
            ))}
            <polyline points={c.edge} />
            {c.lines.map((points, k) => (
              <polyline key={k} points={points} strokeWidth="8" />
            ))}
          </g>
        ))}
      </g>
    </svg>
  );
}

export default function App() {
  return (
    <>
      <GlobalStyle />
      <TopBar>
        <TopInner>
          <ContactList>
            <ContactItem $gap={3}><BsTelephone size={16} />(0251)8362669</ContactItem>
            <ContactItem $gap={7}><BsClock size={17} />Senin - Jum'at :08.00 - 16.00 WIB</ContactItem>
            <ContactItem $gap={7}><BsCalendarCheck size={17} />Jumat, 10 November 2023</ContactItem>
          </ContactList>
          <TopSocial>
            <FacebookIcon />
            <FaTwitter size={16} />
            <InstagramIcon size={16} />
            <FaYoutube size={18} />
          </TopSocial>
        </TopInner>
      </TopBar>
      <Header>
        <HeaderInner>
          <Brand $gap={12} href="#">
            <KpuLogo width={64} height={73} id="head" />
            <BrandName $size={40} $lift={8}>KPU KOTA BOGOR</BrandName>
          </Brand>
          <Nav>
            <a href="#">Beranda</a>
            <a href="#">Kontak</a>
          </Nav>
        </HeaderInner>
      </Header>

      <Main>
        <Container>
          <Card>
            <CardHeader>
              <MenuButton><FaList size={21} />Menu List Data Pilpres 2014</MenuButton>
            </CardHeader>
            <MapTitle>
              <TitleLine $spacing={-0.26}>PETA PEROLEHAN SUARA TERTINGGI PASANGAN CALON DI TINGKAT PPS/ KELURAHAN DALAM</TitleLine>
              <TitleLine $spacing={-0.13}>PILPRES TAHUN 2014 DI KOTA BOGOR</TitleLine>
            </MapTitle>
            <MapFrame>
              <MapCanvas>
                <BaseMap />
                <ZoomControl>
                  <ZoomButton $first>+</ZoomButton>
                  <ZoomButton>−</ZoomButton>
                </ZoomControl>
                <Legend>
                  <LegendTitle>Warna Peta Politik:</LegendTitle>
                  <LegendRow>
                    <Swatch $color="#ff8000" />
                    <span>H. Prabowo Subianto - Ir. H.M. Hatta Rajasa<br />(Pasangan Calon 1)</span>
                  </LegendRow>
                  <LegendRow>
                    <Swatch $color="#ff0000" />
                    <span>Ir. H. Joko Widodo - Drs. H.M. Jusuf Kalla<br />(Pasangan Calon 2)</span>
                  </LegendRow>
                </Legend>
                <Attribution>
                  <FlagIcon width="12" height="8" viewBox="0 0 12 8">
                    <path fill="#4c7be1" d="M0 0h12v4H0z" />
                    <path fill="#ffd500" d="M0 4h12v4H0z" />
                  </FlagIcon>
                  <a href="#">Leaflet</a> | © <a href="#">OpenStreetMap</a>, Peta Politik © <a href="#">KPU KOTA BOGOR</a>
                </Attribution>
              </MapCanvas>
            </MapFrame>
          </Card>
        </Container>
      </Main>

      <Footer>
        <FooterGrid>
          <div>
            <Brand $gap={7} href="#">
              <KpuLogo width={44} height={50} id="foot" />
              <BrandName $size={24} $lift={4}>KPU KOTA BOGOR</BrandName>
            </Brand>
            <FooterText $top={23}>{"Dibuat tujuan website ini adalah untuk menyimpan dan\nmelihat data arsip hasil pilpres setiap tahunnya."}</FooterText>
          </div>
          <div>
            <FooterHeading>ALAMAT</FooterHeading>
            <FooterText>
              <PlaceIcon><MarkerIcon /></PlaceIcon>
              {"Jl.Senam No.12, RT.02/RW.05,\nTanah Sareal, Kec. Tanah Sereal,\nKota Bogor, Jawa Barat 16161"}
            </FooterText>
            <FooterText $top={24}>
              <PlaceIcon><FaPhoneAlt size={16} /></PlaceIcon>
              (0251) 8362669
            </FooterText>
          </div>
          <div>
            <FooterHeading>PENGUNJUNG</FooterHeading>
            <VisitorBadge>Total pengunjung :<VisitorCount>41</VisitorCount></VisitorBadge>
            <FollowTitle>FOLLOW AKUN KAMI:</FollowTitle>
            <SocialRow>
              <SocialButton href="#"><FaTwitter /></SocialButton>
              <SocialButton href="#"><FaFacebookF /></SocialButton>
              <SocialButton href="#"><FaYoutube /></SocialButton>
              <SocialButton href="#"><InstagramIcon /></SocialButton>
            </SocialRow>
          </div>
        </FooterGrid>
        <Copyright>Copyright © 2023 KPU Kota Bogor All Right Reserved.</Copyright>
      </Footer>
    </>
  );
}
